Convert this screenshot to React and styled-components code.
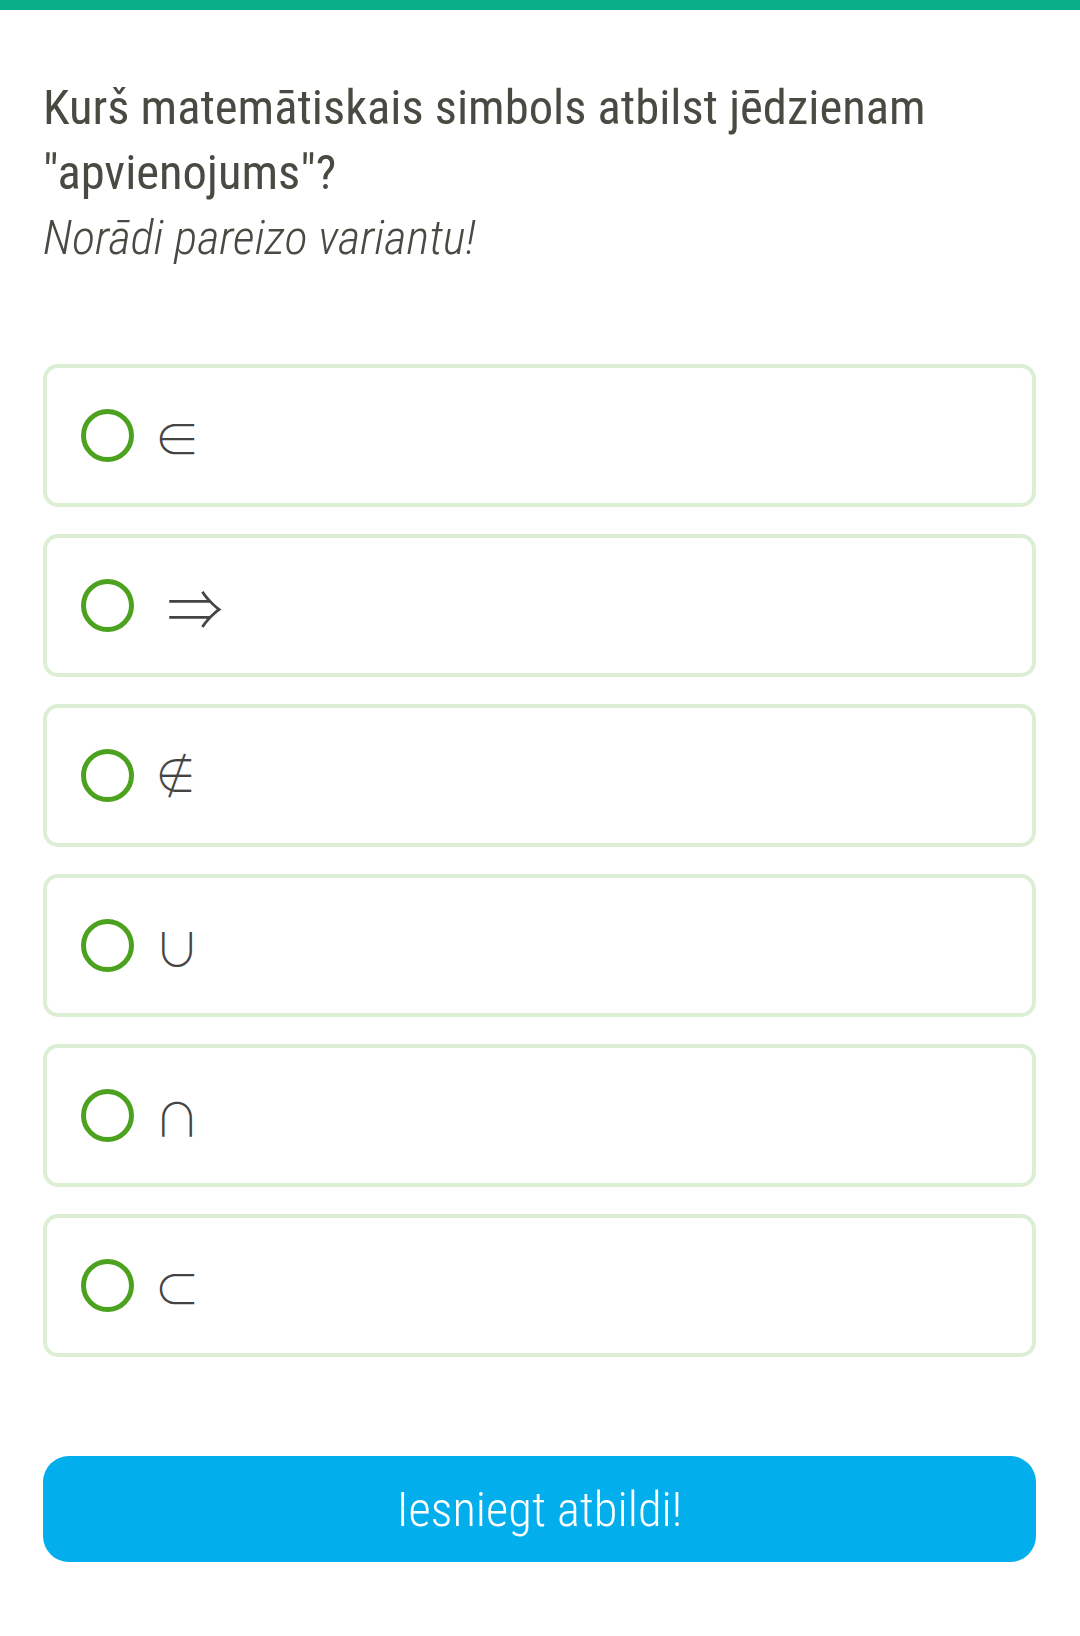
import React, { useState } from 'react'
import styled, { createGlobalStyle, css } from 'styled-components'

const Global = createGlobalStyle`
  body {
    margin: 0;
    background: #fff;
    font-family: Roboto, "Noto Sans", sans-serif;
  }
`

// $kind picks the glyph source: the CJK font has thin set symbols,
// but its ∉ has an upright bar, so that one comes from DejaVu (thinned)
const options = [
  { sym: '∈' },
  { sym: '⇒', kind: 'arrow' },
  { sym: '∉', kind: 'slashed' },
  { sym: '∪' },
  { sym: '∩' },
  { sym: '⊂' },
]

export default function App() {
  const [picked, setPicked] = useState(null)

  return (
    <Page>
      <Global />
      <TopBar />
      <Content>
        <Question>Kurš matemātiskais simbols atbilst jēdzienam "apvienojums"?</Question>
        <Hint>Norādi pareizo variantu!</Hint>
        <Options>
          {options.map((o, i) => (
            <Option key={o.sym} onClick={() => setPicked(i)}>
              <Radio checked={picked === i} />
              <Symbol $kind={o.kind}>{o.sym}</Symbol>
            </Option>
          ))}
        </Options>
        <SubmitBtn>Iesniegt atbildi!</SubmitBtn>
      </Content>
    </Page>
  )
}

const Page = styled.div`
  min-height: 1636px;
  background: #fff;
`

const TopBar = styled.div`
  height: 10px;
  background-color: #09ae89;
`

const Content = styled.div`
  padding: 65px 44px 0 43px;
`

const Question = styled.h1`
  margin: 0;
  font-size: 48.6px;
  font-weight: 400;
  font-stretch: 75%;
  line-height: 65px;
  color: #4a4a42;
`

const Hint = styled.p`
  margin: 0;
  font-size: 48.5px;
  font-weight: 300;
  font-style: italic;
  font-stretch: 75%;
  line-height: 66px;
  color: #4a4a42;
`

const Options = styled.div`
  display: flex;
  flex-direction: column;
  gap: 27px;
  margin-top: 93px;
`

const Option = styled.div`
  display: flex;
  align-items: center;
  height: 143px;
  box-sizing: border-box;
  padding-left: 34px;
  border: 4px solid #dcefd4;
  border-radius: 15px;
  cursor: pointer;
`

const Radio = styled.span`
  width: 53px;
  height: 53px;
  box-sizing: border-box;
  border-radius: 50%;
  border: 5px solid #4ca21f;
  background: ${(p) => (p.checked ? 'radial-gradient(#4ca21f 40%, #fff 45%)' : '#fff')};
  flex-shrink: 0;
`

const Symbol = styled.span`
  margin-left: 20px;
  font-family: "Noto Sans CJK JP", sans-serif;
  font-weight: 300;
  font-size: 46px;
  color: #444;
  line-height: 1;

  ${(p) => p.$kind === 'arrow' && css`
    margin-left: 33px;
    font-size: 56px;
  `}

  ${(p) => p.$kind === 'slashed' && css`
    margin-left: 21px;
    font-family: "DejaVu Sans", sans-serif;
    font-weight: 400;
    font-size: 47px;
    -webkit-text-stroke: 1.3px #fff;
  `}
`

const SubmitBtn = styled.button`
  display: block;
  width: 100%;
  height: 106px;
  margin-top: 99px;
  border: none;
  border-radius: 26px;
  background-color: #03aeec;
  color: #fff;
  font-family: Roboto, sans-serif;
  font-size: 48.5px;
  font-weight: 300;
  font-stretch: 75%;
`
